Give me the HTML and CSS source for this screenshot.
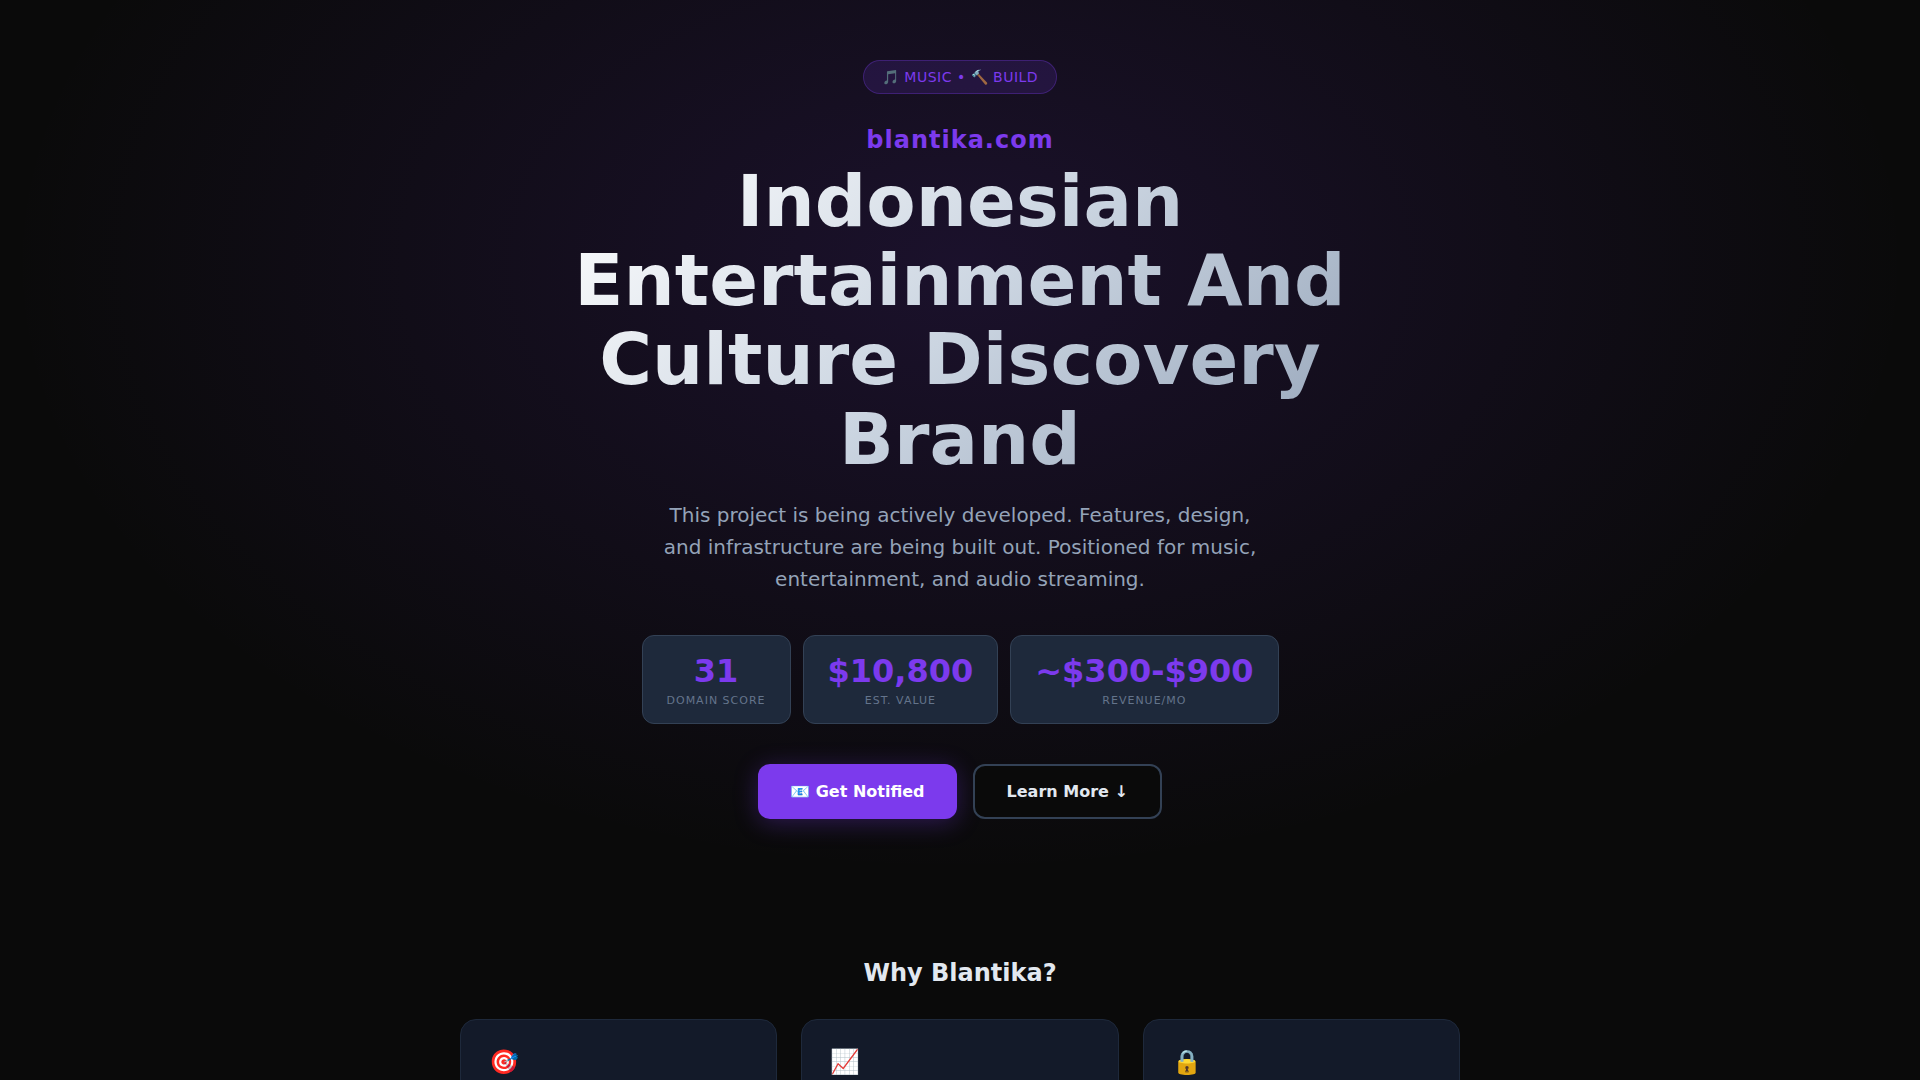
FILE: index.html
```html
<!DOCTYPE html>
<html lang="en">
<head>
  <meta charset="UTF-8">
  <meta name="viewport" content="width=device-width, initial-scale=1.0">
  <title>blantika.com</title>
  <link rel="stylesheet" href="styles.css">
</head>
<body>
  <header class="hero">
    <div class="badge">🎵 MUSIC • 🔨 BUILD</div>
    <div class="domain">blantika.com</div>
    <h1>Indonesian Entertainment And Culture Discovery Brand</h1>
    <p class="tagline">This project is being actively developed. Features, design, and infrastructure are being built out. Positioned for music, entertainment, and audio streaming.</p>

    <div class="stats">
      <div class="stat">
        <div class="stat-value">31</div>
        <div class="stat-label">Domain Score</div>
      </div>
      <div class="stat">
        <div class="stat-value">$10,800</div>
        <div class="stat-label">Est. Value</div>
      </div>
      <div class="stat">
        <div class="stat-value">~$300-$900</div>
        <div class="stat-label">Revenue/mo</div>
      </div>
    </div>

    <div class="actions">
      <a href="#notify" class="btn btn-primary">📧 Get Notified</a>
      <a href="#features" class="btn btn-secondary">Learn More ↓</a>
    </div>
  </header>

  <section class="features" id="features">
    <h2>Why Blantika?</h2>
    <div class="feature-grid">
      <div class="feature"><div class="feature-icon">🎯</div></div>
      <div class="feature"><div class="feature-icon">📈</div></div>
      <div class="feature"><div class="feature-icon">🔒</div></div>
    </div>
  </section>
</body>
</html>
```
FILE: styles.css
```css
* {
  margin: 0;
  padding: 0;
  box-sizing: border-box;
}

body {
  font-family: "DejaVu Sans", sans-serif;
  background: #0a0a0a;
  color: #e2e8f0;
  line-height: 1.6;
  overflow-x: hidden;
}

.hero {
  display: flex;
  flex-direction: column;
  align-items: center;
  padding: 60px 24px;
  text-align: center;
  background: radial-gradient(ellipse at 50% 30%, rgba(124, 58, 237, 0.15) 0%, transparent 70%);
}

.badge {
  padding: 6px 18px;
  margin-bottom: 24px;
  border: 1px solid rgba(124, 58, 237, 0.3);
  border-radius: 20px;
  background: rgba(124, 58, 237, 0.15);
  color: #7c3aed;
  font-size: 14px;
  line-height: 20px;
  letter-spacing: 0.5px;
}

.domain {
  color: #7c3aed;
  font-size: 24px;
  font-weight: 700;
  line-height: 44px;
  letter-spacing: 1px;
}

h1 {
  max-width: 800px;
  margin-bottom: 20px;
  font-size: 72px;
  font-weight: 800;
  line-height: 1.1;
  background: linear-gradient(135deg, #fff 0%, #cbd5e1 50%, #94a3b8 100%);
  -webkit-background-clip: text;
  background-clip: text;
  -webkit-text-fill-color: transparent;
}

.tagline {
  max-width: 600px;
  margin-bottom: 40px;
  color: #94a3b8;
  font-size: 20px;
}

.stats {
  display: flex;
  flex-wrap: wrap;
  justify-content: center;
  gap: 12px;
  margin-bottom: 40px;
}

.stat {
  padding: 16px 24px 12px;
  border: 1px solid #334155;
  border-radius: 12px;
  background: #1e293b;
}

.stat-value {
  color: #7c3aed;
  font-size: 32px;
  font-weight: 800;
  line-height: 38px;
}

.stat-label {
  color: #64748b;
  font-size: 11px;
  line-height: 21px;
  letter-spacing: 1px;
  text-transform: uppercase;
}

.actions {
  display: flex;
  flex-wrap: wrap;
  justify-content: center;
  gap: 16px;
}

.btn {
  display: inline-block;
  padding: 14px 32px;
  border-radius: 12px;
  font-size: 16px;
  font-weight: 700;
  line-height: 27px;
  text-decoration: none;
}

.btn-primary {
  background: #7c3aed;
  color: #fff;
  box-shadow: 0 4px 24px rgba(124, 58, 237, 0.3);
}

.btn-secondary {
  padding: 12px 32px;
  border: 2px solid #334155;
  background: #0a0a0a;
  color: #e2e8f0;
}

.features {
  max-width: 1048px;
  margin: 0 auto;
  padding: 76px 24px;
}

h2 {
  margin-bottom: 28px;
  font-size: 24px;
  line-height: 36px;
  text-align: center;
}

.feature-grid {
  display: grid;
  grid-template-columns: repeat(auto-fit, minmax(260px, 1fr));
  gap: 24px;
}

.feature {
  min-height: 200px;
  padding: 20px 28px;
  border: 1px solid #1e293b;
  border-radius: 16px;
  background: #131a29;
}

.feature-icon {
  font-size: 24px;
  line-height: 44px;
}
```
